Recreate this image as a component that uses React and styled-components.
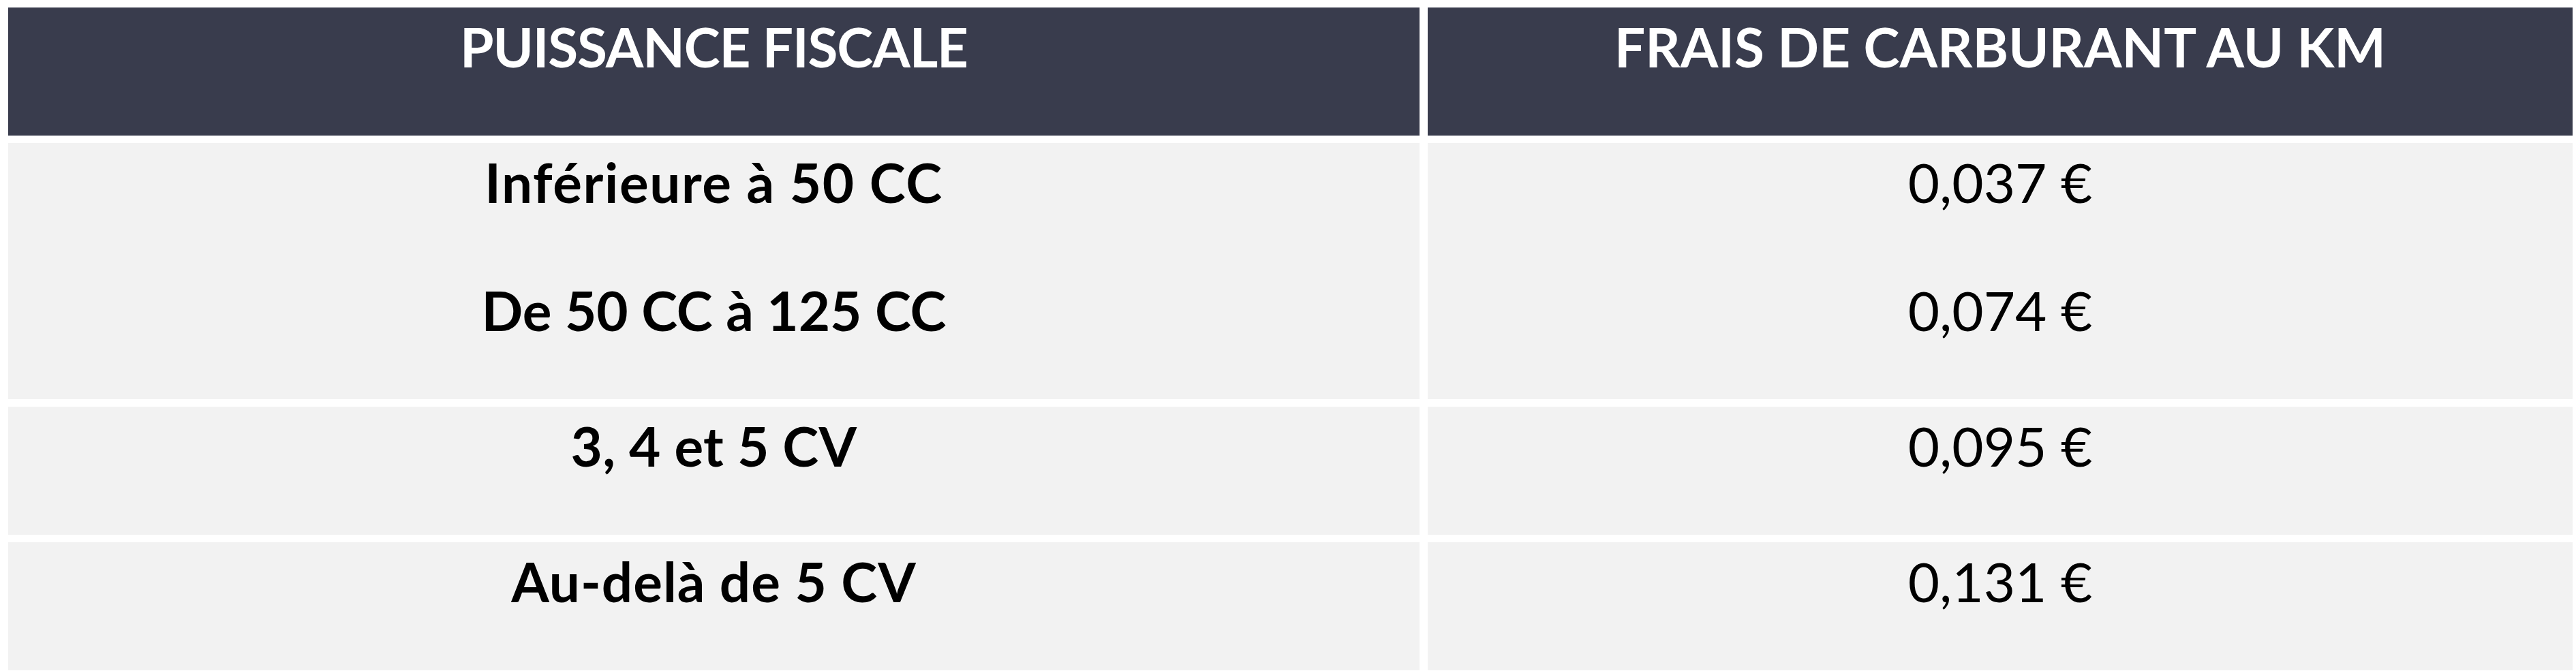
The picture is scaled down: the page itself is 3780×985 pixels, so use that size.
import React from "react";
import styled, { createGlobalStyle } from "styled-components";

const Global = createGlobalStyle`
  html, body { margin: 0; padding: 0; background: #ffffff; }
  body { font-family: Lato, "Open Sans", "Liberation Sans", sans-serif; }
`;

const Page = styled.div`
  padding: 11px 5px 0 12px;
  background: #ffffff;
`;

const Table = styled.div`
  display: grid;
  grid-template-columns: 2071px 1680px;
  column-gap: 12px;
  row-gap: 11px;
`;

const Cell = styled.div`
  background: ${(p) => (p.$head ? "#393c4d" : "#f2f2f2")};
  color: ${(p) => (p.$head ? "#ffffff" : "#000000")};
  display: flex;
  flex-direction: column;
  align-items: center;
`;

const Line = styled.div`
  height: 188px;
  box-sizing: border-box;
  padding-top: 9px;
  line-height: 96px;
  font-size: 80px;
  font-weight: ${(p) => (p.$bold ? 700 : 400)};
  letter-spacing: ${(p) => p.$track || 0}px;
  white-space: nowrap;
  text-align: center;
`;

const rows = [
  {
    left: [
      { t: "Inférieure à 50 CC", k: 1.6 },
      { t: "De 50 CC à 125 CC", k: 0 },
    ],
    right: ["0,037 €", "0,074 €"],
  },
  { left: [{ t: "3, 4 et 5 CV", k: 0.3 }], right: ["0,095 €"] },
  { left: [{ t: "Au-delà de 5 CV", k: 1 }], right: ["0,131 €"] },
];

export default function App() {
  return (
    <Page>
      <Global />
      <Table>
        <Cell $head>
          <Line $bold $track={-1.1}>
            PUISSANCE FISCALE
          </Line>
        </Cell>
        <Cell $head>
          <Line $bold>FRAIS DE CARBURANT AU KM</Line>
        </Cell>
        {rows.map((r, i) => (
          <React.Fragment key={i}>
            <Cell>
              {r.left.map((l) => (
                <Line key={l.t} $bold $track={l.k}>
                  {l.t}
                </Line>
              ))}
            </Cell>
            <Cell>
              {r.right.map((t) => (
                <Line key={t}>{t}</Line>
              ))}
            </Cell>
          </React.Fragment>
        ))}
      </Table>
    </Page>
  );
}
